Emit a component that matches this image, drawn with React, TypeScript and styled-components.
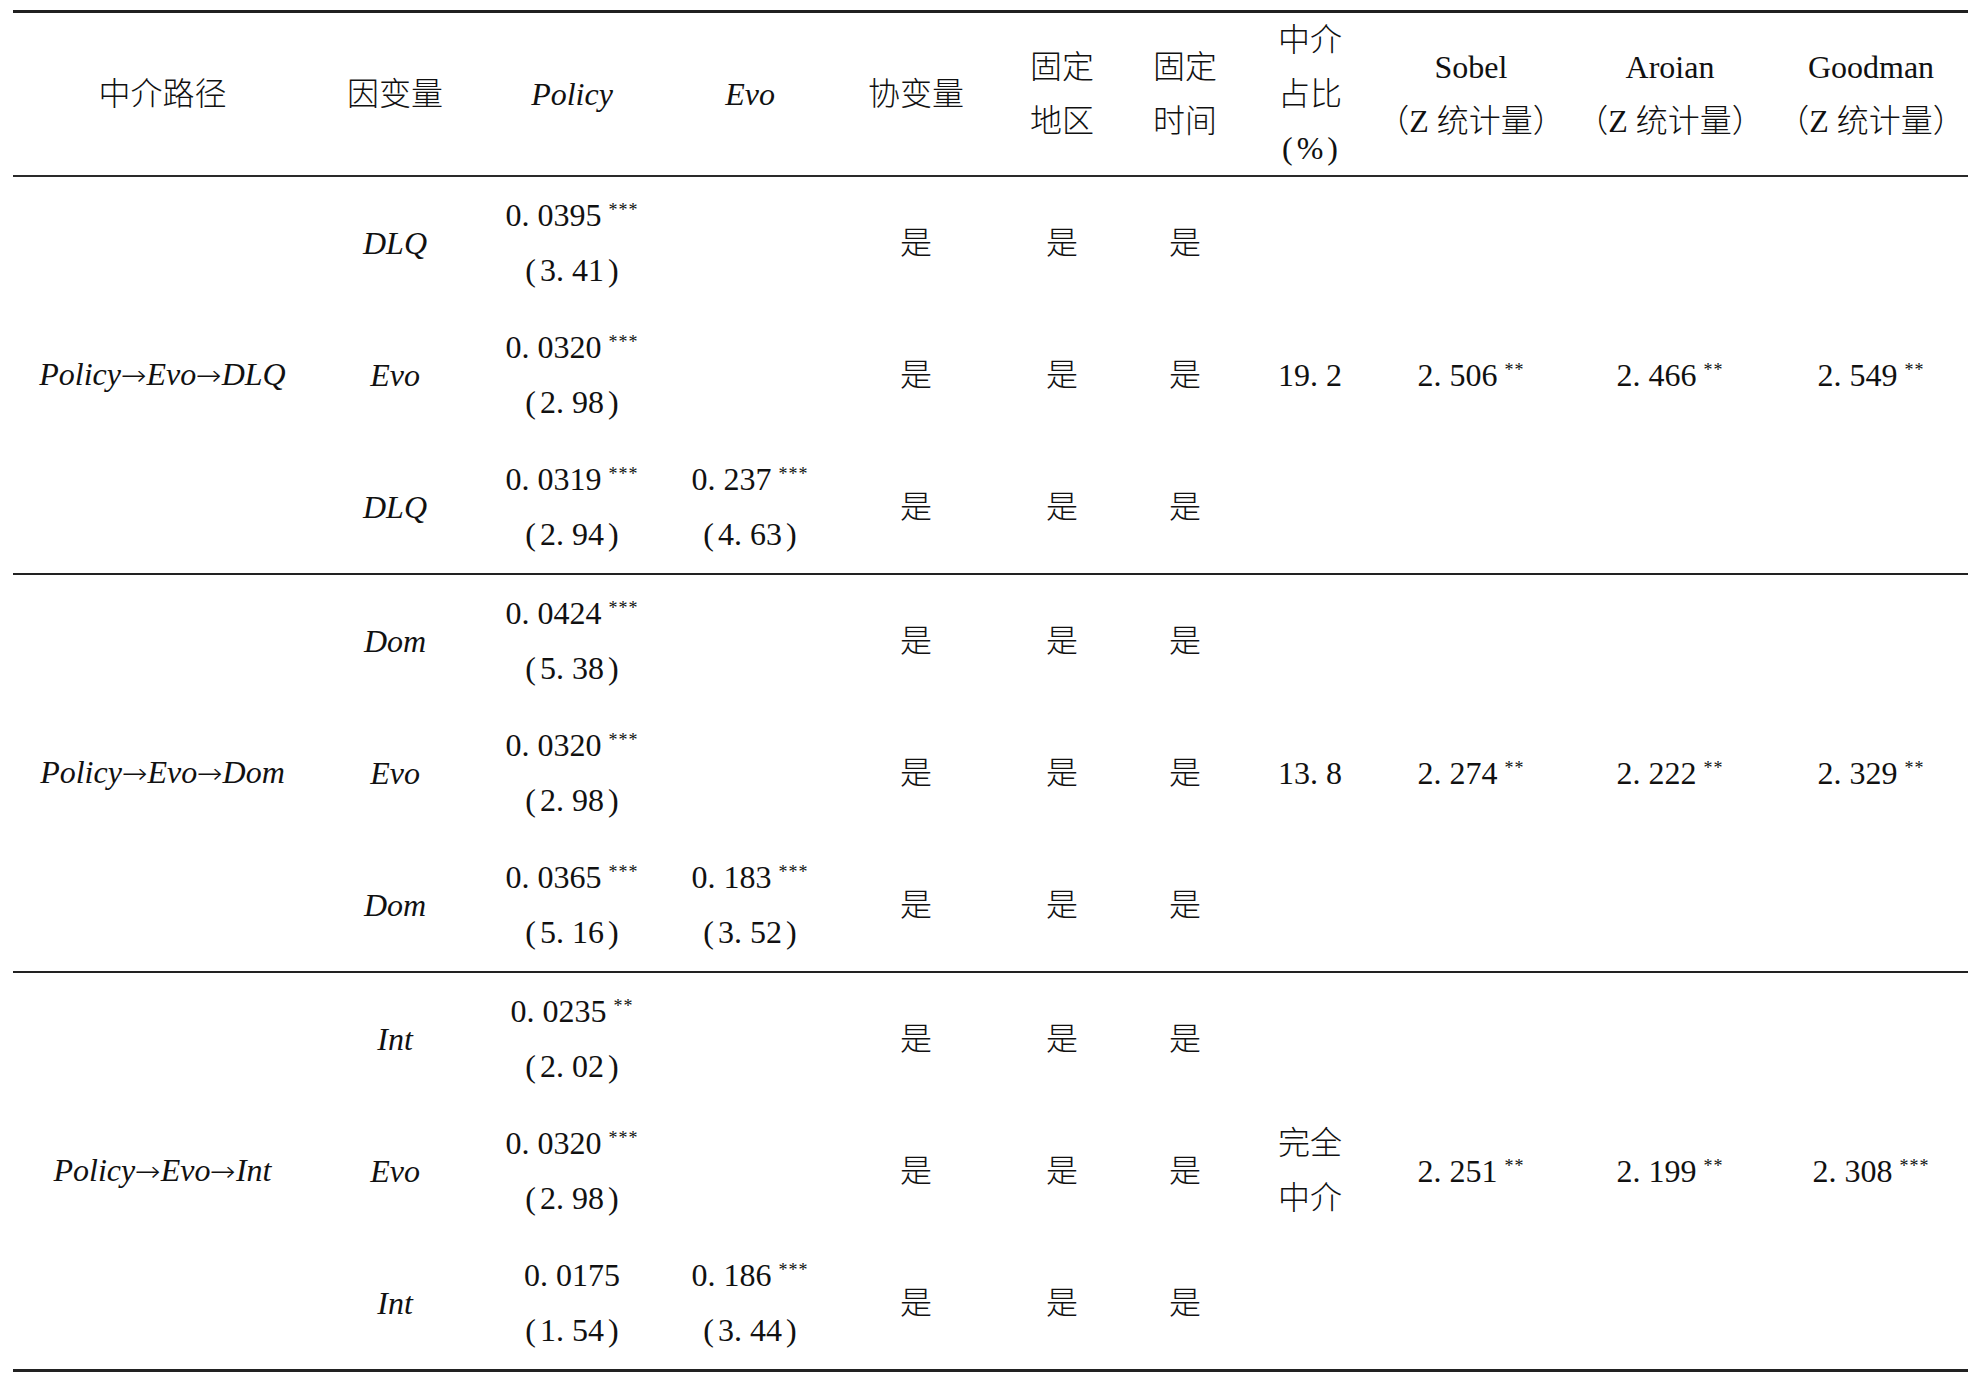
import React from "react";
import styled, { createGlobalStyle } from "styled-components";

const GlobalStyle = createGlobalStyle`
  html, body {
    margin: 0;
    padding: 0;
    background: #ffffff;
  }
  body {
    font-family: "Liberation Serif", "Noto Sans CJK SC", serif;
    color: #111111;
  }
`;

const Page = styled.div`
  padding: 10px 0 0 13px;
`;

const Table = styled.table`
  width: 1955px;
  table-layout: fixed;
  border-collapse: separate;
  border-spacing: 0;
  font-family: "Liberation Serif", "Noto Sans CJK SC", serif;
  font-size: 32px;
  font-weight: 300;
  color: #111111;
`;

const HeadCell = styled.th`
  padding: 0;
  font-weight: 300;
  line-height: 54px;
  text-align: center;
  vertical-align: middle;
  border-top: 3px solid #202020;
  border-bottom: 2px solid #2a2a2a;
`;

const Cell = styled.td<{ $rule: number }>`
  padding: 11px 0;
  line-height: 55px;
  text-align: center;
  vertical-align: middle;
  white-space: nowrap;
  border-bottom: ${(p) => (p.$rule ? `${p.$rule}px solid #222222` : "none")};
`;

const Line = styled.div`
  display: block;
`;

const Var = styled.span`
  font-style: italic;
`;

const Arrow = styled.span`
  font-family: "DejaVu Sans", sans-serif;
  font-style: normal;
  font-size: 28px;
  display: inline-block;
  transform: scaleX(1.1);
  margin: 0 1px;
`;

const Paren = styled.span<{ $side: "l" | "r" }>`
  margin: ${(p) => (p.$side === "l" ? "0 4px 0 0" : "0 0 0 4px")};
`;

const Stars = styled.span`
  font-size: 18px;
  line-height: 0;
  letter-spacing: 1px;
  margin-left: 7px;
  vertical-align: 10px;
`;

type Coef = { v: string; s?: string; t: string };
type Row = { dv: string; policy: Coef; evo?: Coef };
type Group = {
  path: string[];
  share: string[];
  z: { v: string; s: string }[];
  rows: Row[];
};

const groups: Group[] = [
  {
    path: ["Policy", "Evo", "DLQ"],
    share: ["19. 2"],
    z: [
      { v: "2. 506", s: "**" },
      { v: "2. 466", s: "**" },
      { v: "2. 549", s: "**" },
    ],
    rows: [
      { dv: "DLQ", policy: { v: "0. 0395", s: "***", t: "3. 41" } },
      { dv: "Evo", policy: { v: "0. 0320", s: "***", t: "2. 98" } },
      {
        dv: "DLQ",
        policy: { v: "0. 0319", s: "***", t: "2. 94" },
        evo: { v: "0. 237", s: "***", t: "4. 63" },
      },
    ],
  },
  {
    path: ["Policy", "Evo", "Dom"],
    share: ["13. 8"],
    z: [
      { v: "2. 274", s: "**" },
      { v: "2. 222", s: "**" },
      { v: "2. 329", s: "**" },
    ],
    rows: [
      { dv: "Dom", policy: { v: "0. 0424", s: "***", t: "5. 38" } },
      { dv: "Evo", policy: { v: "0. 0320", s: "***", t: "2. 98" } },
      {
        dv: "Dom",
        policy: { v: "0. 0365", s: "***", t: "5. 16" },
        evo: { v: "0. 183", s: "***", t: "3. 52" },
      },
    ],
  },
  {
    path: ["Policy", "Evo", "Int"],
    share: ["完全", "中介"],
    z: [
      { v: "2. 251", s: "**" },
      { v: "2. 199", s: "**" },
      { v: "2. 308", s: "***" },
    ],
    rows: [
      { dv: "Int", policy: { v: "0. 0235", s: "**", t: "2. 02" } },
      { dv: "Evo", policy: { v: "0. 0320", s: "***", t: "2. 98" } },
      {
        dv: "Int",
        policy: { v: "0. 0175", t: "1. 54" },
        evo: { v: "0. 186", s: "***", t: "3. 44" },
      },
    ],
  },
];

const widths = [299, 166, 188, 168, 164, 128, 118, 132, 190, 208, 194];

const CoefCell: React.FC<{ c?: Coef; rule: number }> = ({ c, rule }) => (
  <Cell $rule={rule}>
    {c ? (
      <>
        <Line>
          {c.v}
          {c.s ? <Stars>{c.s}</Stars> : null}
        </Line>
        <Line>
          <Paren $side="l">(</Paren>
          {c.t}
          <Paren $side="r">)</Paren>
        </Line>
      </>
    ) : null}
  </Cell>
);

const Path: React.FC<{ parts: string[] }> = ({ parts }) => (
  <Var>
    {parts.map((p, i) => (
      <React.Fragment key={i}>
        {i > 0 ? <Arrow>→</Arrow> : null}
        {p}
      </React.Fragment>
    ))}
  </Var>
);

export default function App() {
  return (
    <>
      <GlobalStyle />
      <Page>
        <Table>
          <colgroup>
            {widths.map((w, i) => (
              <col key={i} style={{ width: w }} />
            ))}
          </colgroup>
          <thead>
            <tr>
              <HeadCell>中介路径</HeadCell>
              <HeadCell>因变量</HeadCell>
              <HeadCell>
                <Var>Policy</Var>
              </HeadCell>
              <HeadCell>
                <Var>Evo</Var>
              </HeadCell>
              <HeadCell>协变量</HeadCell>
              <HeadCell>
                <Line>固定</Line>
                <Line>地区</Line>
              </HeadCell>
              <HeadCell>
                <Line>固定</Line>
                <Line>时间</Line>
              </HeadCell>
              <HeadCell>
                <Line>中介</Line>
                <Line>占比</Line>
                <Line>
                  <Paren $side="l">(</Paren>%<Paren $side="r">)</Paren>
                </Line>
              </HeadCell>
              <HeadCell>
                <Line>Sobel</Line>
                <Line>（Z 统计量）</Line>
              </HeadCell>
              <HeadCell>
                <Line>Aroian</Line>
                <Line>（Z 统计量）</Line>
              </HeadCell>
              <HeadCell>
                <Line>Goodman</Line>
                <Line>（Z 统计量）</Line>
              </HeadCell>
            </tr>
          </thead>
          <tbody>
            {groups.map((g, gi) => {
              const groupRule = gi === groups.length - 1 ? 3 : 2;
              return g.rows.map((r, ri) => {
                const rule = ri === g.rows.length - 1 ? groupRule : 0;
                return (
                  <tr key={`${gi}-${ri}`}>
                    {ri === 0 ? (
                      <Cell rowSpan={3} $rule={groupRule}>
                        <Path parts={g.path} />
                      </Cell>
                    ) : null}
                    <Cell $rule={rule}>
                      <Var>{r.dv}</Var>
                    </Cell>
                    <CoefCell c={r.policy} rule={rule} />
                    <CoefCell c={r.evo} rule={rule} />
                    <Cell $rule={rule}>是</Cell>
                    <Cell $rule={rule}>是</Cell>
                    <Cell $rule={rule}>是</Cell>
                    {ri === 0 ? (
                      <>
                        <Cell rowSpan={3} $rule={groupRule}>
                          {g.share.map((s, si) => (
                            <Line key={si}>{s}</Line>
                          ))}
                        </Cell>
                        {g.z.map((z, zi) => (
                          <Cell key={zi} rowSpan={3} $rule={groupRule}>
                            {z.v}
                            <Stars>{z.s}</Stars>
                          </Cell>
                        ))}
                      </>
                    ) : null}
                  </tr>
                );
              });
            })}
          </tbody>
        </Table>
      </Page>
    </>
  );
}
